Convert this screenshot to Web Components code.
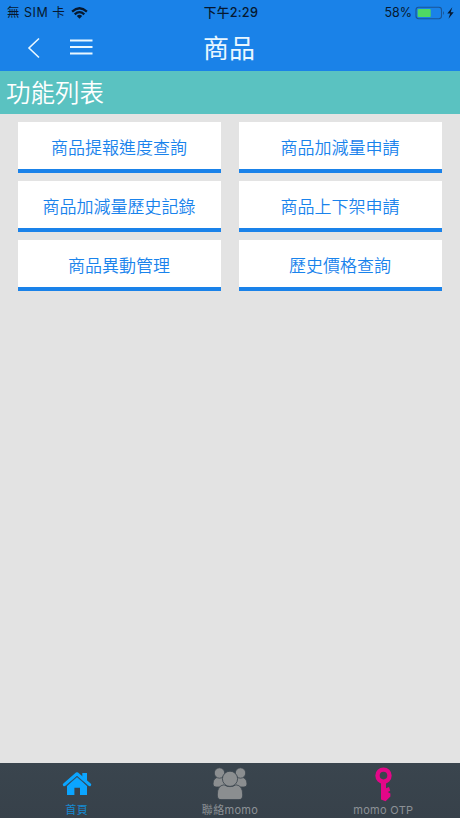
<!DOCTYPE html>
<html lang="zh-Hant">
<head>
<meta charset="utf-8">
<title>商品</title>
<style>
html,body{margin:0;height:100%}
body{font-family:Inter,"Noto Sans CJK TC",sans-serif;background:#e3e3e3;overflow:hidden}
</style>
</head>
<body>
<app-screen></app-screen>
<script>
const define = (name, html) => customElements.define(name, class extends HTMLElement {
  constructor() {
    super();
    const t = document.createElement('template');
    t.innerHTML = html;
    this.attachShadow({mode: 'open'}).append(t.content.cloneNode(true));
  }
});

define('status-bar', `<style>
:host{display:grid;grid-template-columns:1fr auto 1fr;height:24px;align-items:center;padding:0 5px 0 7px;box-sizing:border-box;color:#06182f;font-size:12.5px;line-height:25px;white-space:nowrap}
div{display:flex;align-items:center}
.l{gap:6px;letter-spacing:.5px}.c{font-weight:500;font-size:12.7px;letter-spacing:.25px}.r{justify-content:flex-end}
svg{display:block}
</style>
<div class="l"><span>無 SIM 卡</span>
<svg width="17" height="12" viewBox="0 0 17 12"><g fill="none" stroke="#06182f" stroke-width="2.3"><path d="M1.1 4.6Q8.5-2 15.9 4.6"/><path d="M3.7 7.3Q8.5 3 13.3 7.3"/></g><path d="M5.8 9Q8.5 6.7 11.2 9L8.5 11.8Z" fill="#06182f"/></svg></div>
<div class="c">下午2:29</div>
<div class="r"><span>58%</span>
<svg width="40" height="14" viewBox="0 0 40 14" style="margin-left:3px"><rect x="1" y="1.3" width="25.5" height="11.4" rx="2.6" fill="none" stroke="#1a5596" stroke-width="1.1"/><path d="M28 5Q30 7 28 9Z" fill="#1a5596"/><rect x="2.7" y="3" width="13" height="8" rx=".8" fill="#4fd964"/><path d="M37.3 1.3L32.3 7.6H35.2L33.5 12.7L38.7 6.2H35.7Z" fill="#06182f"/></svg></div>`);

define('nav-bar', `<style>
:host{display:grid;grid-template-columns:1fr auto 1fr;height:47px;align-items:center;color:#e9f7ff}
.i{display:flex;gap:29px;padding-left:27px}
h1{margin:0 2px 0 0;font-size:26px;line-height:49px;height:47px;font-weight:400}
svg{display:block}
</style>
<div class="i"><svg width="14" height="22" viewBox="0 0 14 22"><path d="M12 1.5L2 11L12 20.5" fill="none" stroke="currentColor" stroke-width="1.6"/></svg>
<svg width="23" height="22" viewBox="0 0 23 22"><path d="M0 3.5H22.5M0 10H22.5M0 16.5H22.5" stroke="currentColor" stroke-width="2.1"/></svg></div>
<h1><slot></slot></h1>`);

define('section-title', `<style>
:host{display:block;box-sizing:border-box;height:43px;padding-left:6px;background:#5ac2c1;color:#fff;font-size:24.5px;font-weight:350;line-height:45px}
</style><slot></slot>`);

define('menu-card', `<style>
:host{display:block;box-sizing:border-box;height:51px;background:#fff;border-bottom:4px solid #1a82e9;padding-right:1px;color:#1983ec;font-size:17px;font-weight:350;line-height:52px;text-align:center;white-space:nowrap}
</style><slot></slot>`);

define('menu-grid', `<style>
:host{display:grid;grid-template-columns:203px 203px;column-gap:18px;row-gap:8px;padding:8px 18px}
</style><slot></slot>`);

define('tab-item', `<style>
:host{display:flex;flex-direction:column;align-items:center;flex:1;color:#8c9196;font-size:11px;letter-spacing:.3px}
.icon{height:37px;padding-top:3px;box-sizing:border-box}
.label{line-height:21px}
</style><div class="icon"><slot name="icon"></slot></div><div class="label"><slot></slot></div>`);

define('tab-bar', `<style>
:host{display:flex;height:55px;background:linear-gradient(#3a454e,#37414a)}
svg{display:block}
.home{color:#1689cf}
</style>
<tab-item class="home"><svg slot="icon" width="34" height="34" viewBox="0 0 34 34"><g fill="#0ba5ff"><path d="M22.3 7H27V15L22.3 11Z"/><path d="M17 11L27 20V29H20V21.8H14.4V29H7V20Z"/></g><path d="M4.4 18.6L17 7.8L29.6 18.6" fill="none" stroke="#0ba5ff" stroke-width="3.2" stroke-linecap="round" stroke-linejoin="round"/><path d="M6.2 20L17 10.7L27.8 20" fill="none" stroke="#245f84" stroke-width=".7"/></svg>首頁</tab-item>
<tab-item><svg slot="icon" width="36" height="34" viewBox="0 0 36 34"><g fill="#8b8e90" stroke="#3a444d" stroke-width=".8"><path d="M1 18Q1 11 8 11Q14 11 14 17V21H4Q1 21 1 18ZM35 18Q35 11 28 11Q22 11 22 17V21H32Q35 21 35 18Z"/><circle cx="7.5" cy="7" r="5.2"/><circle cx="28.5" cy="7" r="5.2"/><path d="M5.3 29Q5.3 19.5 12 18.8Q18 22.5 24 18.8Q30.7 19.5 30.7 29Q30.7 33.6 27 33.6H9Q5.3 33.6 5.3 29Z"/><circle cx="18" cy="12.8" r="7.6"/></g></svg>聯絡momo</tab-item>
<tab-item><svg slot="icon" width="20" height="36" viewBox="0 0 20 36"><circle cx="10.5" cy="9.6" r="6" fill="none" stroke="#e30788" stroke-width="4.4"/><path d="M8 16H13V22.3L16 21.1L17.2 24.7L14.8 25.9L17.4 27.5V30.5L12.6 35.2L8 33.6Z" fill="#e30788"/></svg>momo OTP</tab-item>`);

define('app-screen', `<style>
:host{display:flex;flex-direction:column;width:460px;height:818px;background:#e3e3e3}
header{background:#1a82e8}
main{flex:1}
</style>
<header><status-bar></status-bar><nav-bar>商品</nav-bar></header>
<main><section-title>功能列表</section-title>
<menu-grid>
<menu-card>商品提報進度查詢</menu-card><menu-card>商品加減量申請</menu-card>
<menu-card>商品加減量歷史記錄</menu-card><menu-card>商品上下架申請</menu-card>
<menu-card>商品異動管理</menu-card><menu-card>歷史價格查詢</menu-card>
</menu-grid></main>
<tab-bar></tab-bar>`);
</script>
</body>
</html>
